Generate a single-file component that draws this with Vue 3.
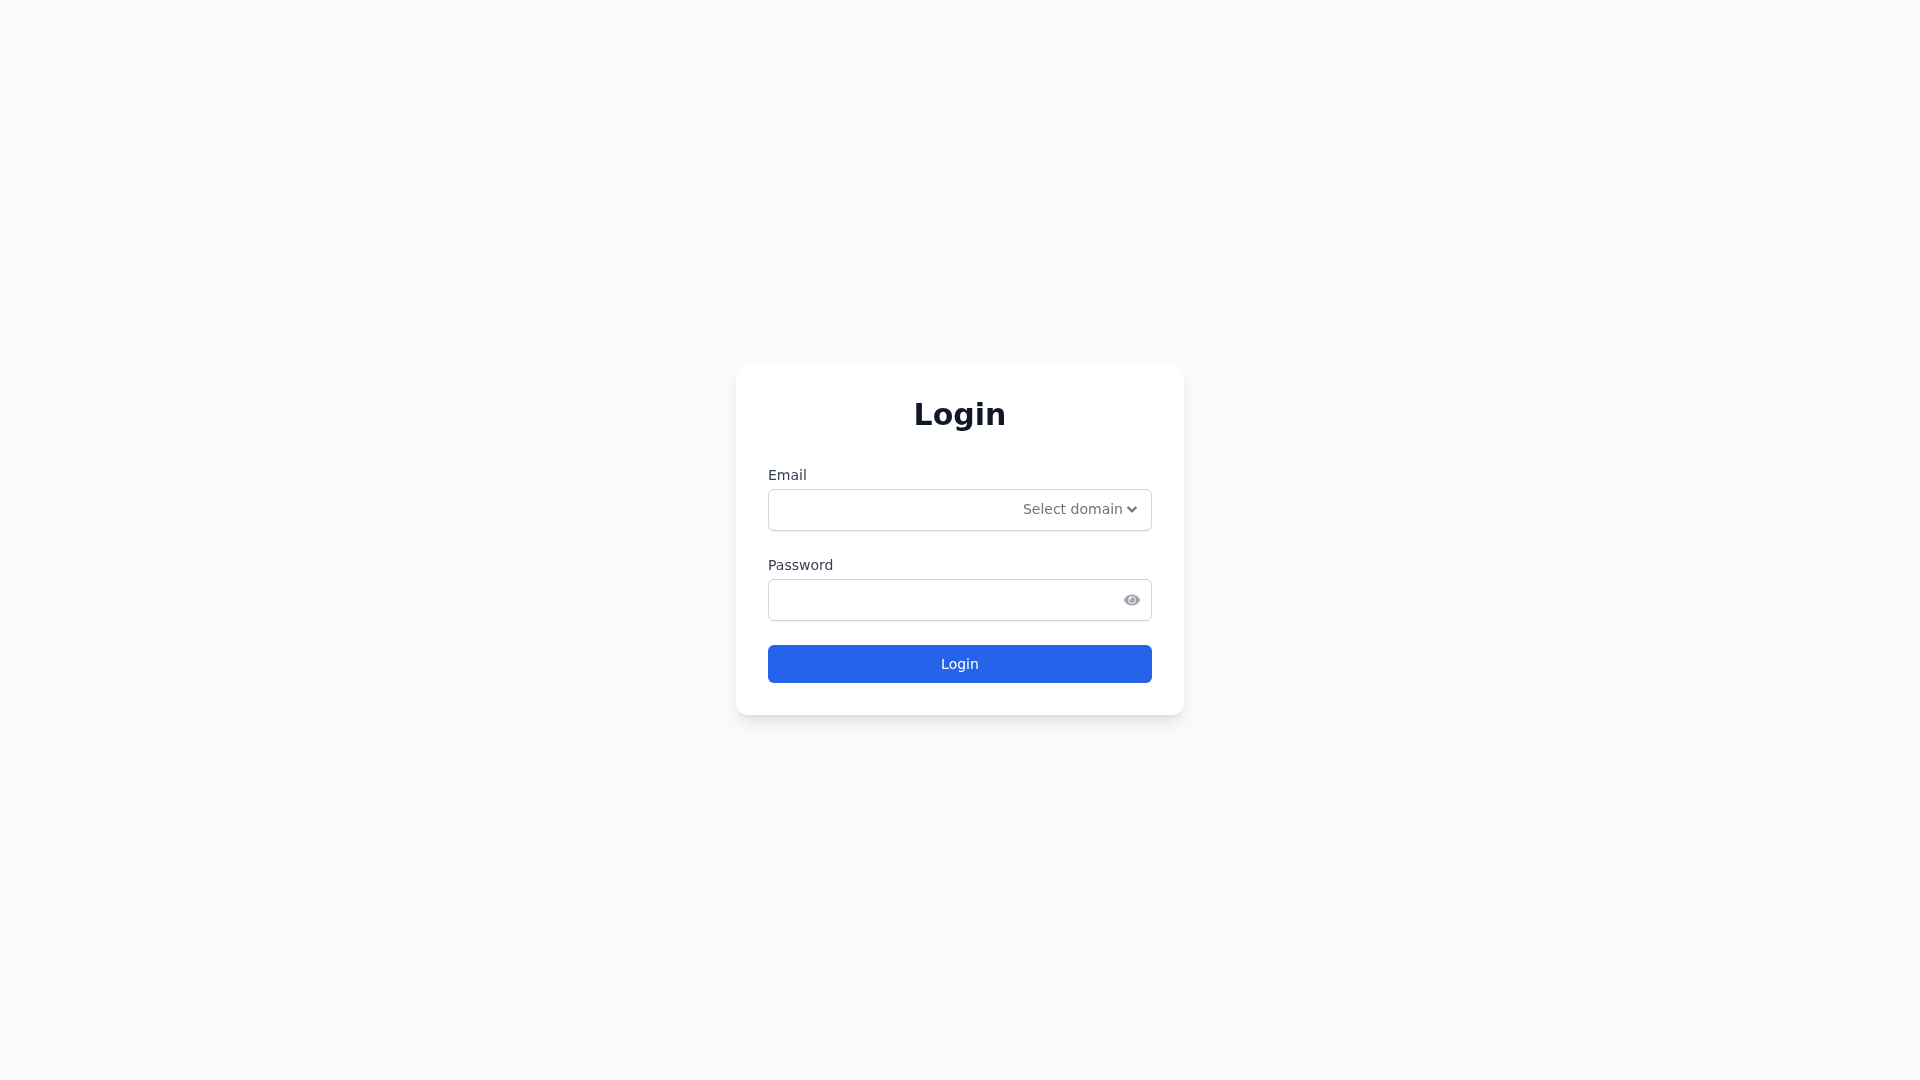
<template>
  <div class="login-page">
    <form class="login-card" @submit.prevent>
      <h1 class="title">Login</h1>

      <!-- Email -->
      <div class="field">
        <label class="label" for="email">Email</label>
        <div class="input-wrap">
          <input id="email" v-model="email" class="input" type="text" />
          <button class="domain-btn" type="button">
            <span>Select domain</span>
            <svg class="chevron" viewBox="0 0 448 512" fill="currentColor" stroke="currentColor" stroke-width="30">
              <path
                d="M207.029 381.476L12.686 187.132c-9.373-9.373-9.373-24.569 0-33.941l22.667-22.667c9.357-9.357 24.522-9.375 33.901-.04L224 284.505l154.745-154.021c9.379-9.335 24.544-9.317 33.901.04l22.667 22.667c9.373 9.373 9.373 24.569 0 33.941L240.971 381.476c-9.373 9.372-24.569 9.372-33.942 0z"
              />
            </svg>
          </button>
        </div>
      </div>

      <!-- Password -->
      <div class="field">
        <label class="label" for="password">Password</label>
        <div class="input-wrap">
          <input id="password" v-model="password" class="input" :type="showPassword ? 'text' : 'password'" />
          <button class="eye-btn" type="button" @click="showPassword = !showPassword">
            <svg class="eye" viewBox="0 0 576 512" fill="currentColor" stroke="currentColor" stroke-width="16">
              <path
                d="M572.52 241.4C518.29 135.59 410.93 64 288 64S57.68 135.64 3.48 241.4a32.35 32.35 0 0 0 0 29.19C57.71 376.41 165.07 448 288 448s230.32-71.64 284.52-177.4a32.35 32.35 0 0 0 0-29.2zM288 400a144 144 0 1 1 144-144 143.93 143.93 0 0 1-144 144zm0-240a95.31 95.31 0 0 0-25.31 3.79 47.85 47.85 0 0 1-66.9 66.9A95.78 95.78 0 1 0 288 160z"
              />
            </svg>
          </button>
        </div>
      </div>

      <button class="submit" type="submit">Login</button>
    </form>
  </div>
</template>

<script setup>
import { ref } from "vue";

const email = ref("");
const password = ref("");
const showPassword = ref(false);
</script>

<style>
html,
body {
  margin: 0;
  padding: 0;
}
</style>

<style scoped>
.login-page {
  min-height: 100vh;
  display: flex;
  align-items: center;
  justify-content: center;
  background-color: #f9fafb;
  font-family: "DejaVu Sans", sans-serif;
}

.login-card {
  width: 448px;
  box-sizing: border-box;
  padding: 32px;
  background-color: #fff;
  border-radius: 12px;
  box-shadow: 0 10px 15px -3px rgba(0, 0, 0, 0.1), 0 4px 6px -4px rgba(0, 0, 0, 0.1);
  will-change: transform;
}

.title {
  margin: 0 0 32px;
  font-size: 30px;
  line-height: 36px;
  font-weight: 700;
  text-align: center;
  color: #111827;
}

.field {
  margin-bottom: 24px;
}

.label {
  display: block;
  margin-bottom: 4px;
  font-size: 14px;
  line-height: 20px;
  color: #374151;
}

.input-wrap {
  position: relative;
}

.input {
  display: block;
  width: 100%;
  height: 42px;
  box-sizing: border-box;
  padding: 8px 12px;
  font-family: inherit;
  font-size: 14px;
  color: #111827;
  background-color: #fff;
  border: 1px solid #d1d5db;
  border-radius: 6px;
  box-shadow: 0 1px 2px 0 rgba(0, 0, 0, 0.05);
  outline: none;
}

.domain-btn {
  position: absolute;
  top: 0;
  right: 15px;
  bottom: 0;
  display: flex;
  align-items: center;
  gap: 4px;
  padding: 0 0 2px;
  font-family: inherit;
  font-size: 14px;
  line-height: 20px;
  color: #6b7280;
  background: none;
  border: none;
  cursor: pointer;
}

.chevron {
  width: 10px;
  height: 11px;
  overflow: visible;
}

.eye-btn {
  position: absolute;
  top: 0;
  right: 12px;
  bottom: 0;
  display: flex;
  align-items: center;
  padding: 0;
  color: #9ca3af;
  background: none;
  border: none;
  cursor: pointer;
}

.eye {
  width: 16px;
  height: 14px;
  overflow: visible;
}

.submit {
  display: block;
  width: 100%;
  height: 38px;
  box-sizing: border-box;
  padding: 8px 16px;
  font-family: inherit;
  font-size: 14px;
  line-height: 20px;
  color: #fff;
  background-color: #2563eb;
  border: 1px solid transparent;
  border-radius: 6px;
  cursor: pointer;
}
</style>
